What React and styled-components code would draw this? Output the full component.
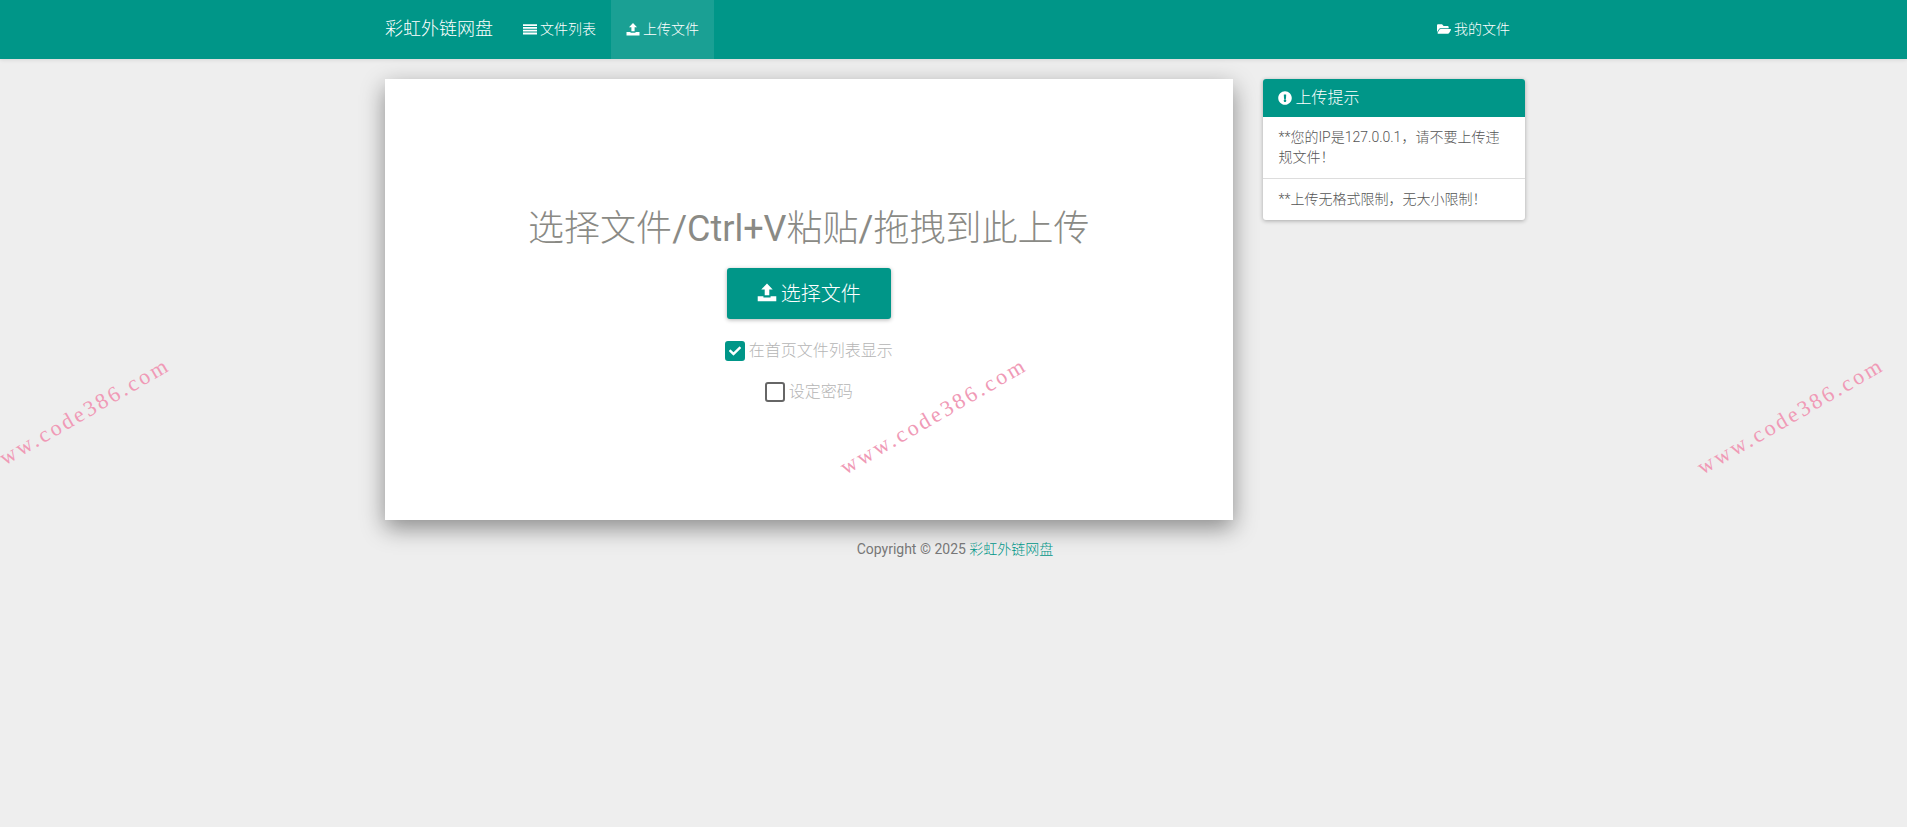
import React from "react";
import styled, { createGlobalStyle } from "styled-components";
import { FaFolderOpen, FaExclamationCircle, FaCheck } from "react-icons/fa";

const Global = createGlobalStyle`
  html, body { margin: 0; padding: 0; height: 100%; background: #eeeeee; }
  body { font-family: Roboto, "Noto Sans CJK SC", sans-serif; font-size: 14px; line-height: 20px; color: #666; overflow: hidden; }
  #root { position: relative; min-height: 827px; }
`;
const Navbar = styled.nav`
  height: 59px; background: #009688; box-shadow: 0 1px 4px rgba(0,0,0,.1);
`;
const Container = styled.div`
  width: 1170px; margin: 0 auto; position: relative; left: 1.5px; display: flex;
`;
const NavInner = styled(Container)`
  padding: 0 15px; box-sizing: border-box; height: 59px; align-items: stretch;
`;
const Brand = styled.a`
  font-size: 18px; font-weight: 300; color: #fff; padding: 0 15px 1px 0; display: flex; align-items: center;
`;
const NavLink = styled.a`
  display: flex; align-items: center; gap: 3px; padding: 0 15px 2px; color: #fff; font-size: 14px; font-weight: 300;
  background: ${p => (p.$active ? "rgba(255,255,255,.1)" : "transparent")};
  margin-left: ${p => (p.$right ? "auto" : "0")};
  svg { width: 14px; height: 14px; }
`;
const Main = styled(Container)`
  padding-top: 20px; align-items: flex-start;
`;
const Column = styled.div`
  box-sizing: border-box; padding: 0 15px; width: ${p => p.$w}px;
`;
const Card = styled.section`
  height: 441px; box-sizing: border-box; background: #fff; padding-top: 130px;
  box-shadow: 0 8px 22px rgba(0,0,0,.42);
  display: flex; flex-direction: column; align-items: center;
`;
const Title = styled.h1`
  margin: 0; font-size: 36px; line-height: 40px; font-weight: 300; color: #8a8a85;
`;
const Latin = styled.span`
  font-weight: 400;
`;
const UploadButton = styled.button`
  margin-top: 19px; height: 51px; width: 164px; border: 0; border-radius: 3px; background: #009688; color: #fff; padding-bottom: 4px;
  font: 300 20px Roboto, "Noto Sans CJK SC", sans-serif; display: flex; align-items: center; justify-content: center; gap: 4px;
  box-shadow: 0 1px 4px rgba(0,0,0,.3);
  svg { width: 20px; height: 20px; }
`;
const CheckRow = styled.label`
  display: flex; align-items: center; gap: 4px; height: 24px; font-size: 16px; font-weight: 300; color: #b5b5b5;
  margin-top: ${p => p.$mt}px;
`;
const Box = styled.span`
  width: 20px; height: 20px; box-sizing: border-box; border-radius: 3px; display: flex; align-items: center; justify-content: center;
  background: ${p => (p.$checked ? "#009688" : "#fff")};
  border: 2px solid ${p => (p.$checked ? "#009688" : "#666")};
  color: #fff;
  svg { width: 12px; height: 12px; }
`;
const Panel = styled.aside`
  background: #fff; border-radius: 3px; box-shadow: 0 1px 4px rgba(0,0,0,.3); overflow: hidden;
`;
const PanelHead = styled.div`
  height: 38px; background: #009688; color: #fff; font-size: 16px; font-weight: 300; padding: 0 15px; display: flex; align-items: center; gap: 4px;
  svg { width: 14px; height: 14px; }
`;
const PanelItem = styled.div`
  padding: 10px 15px 11px 16px; color: #555; font-size: 14px; font-weight: 300; line-height: 20px;
  & + & { border-top: 1px solid #ddd; }
`;
const Footer = styled.footer`
  text-align: center; width: 1170px; margin: 19px auto 0; position: relative; left: 1.5px; color: #777; font-size: 14px;
  a { color: #009688; font-weight: 300; }
`;
const Mark = styled.span`
  position: absolute; left: ${p => p.$x}px; top: 459px; transform: rotate(-30deg); transform-origin: 0 50%;
  font-family: "Liberation Serif", serif; font-size: 22px; line-height: 20px; letter-spacing: 2.8px; color: #f09ab6; white-space: nowrap;
  pointer-events: none;
`;

const UploadIcon = () => (
  <svg viewBox="0 0 14 14" fill="currentColor" aria-hidden="true">
    <path d="M7 1 L11 5.2 H8.6 V9.2 H5.4 V5.2 H3 Z" />
    <path d="M0.5 10 H4.5 V10.8 H9.5 V10 H13.5 V13.5 H0.5 Z" />
  </svg>
);
const ListIcon = () => (
  <svg viewBox="0 0 14 14" fill="currentColor" aria-hidden="true">
    <path d="M0 2.2 H14 V4 H0 Z M0 5 H14 V6.8 H0 Z M0 7.8 H14 V9.6 H0 Z M0 10.6 H14 V12.4 H0 Z" />
  </svg>
);

export default function App() {
  return (
    <>
      <Global />
      <Navbar>
        <NavInner>
          <Brand>彩虹外链网盘</Brand>
          <NavLink><ListIcon />文件列表</NavLink>
          <NavLink $active><UploadIcon />上传文件</NavLink>
          <NavLink $right><FaFolderOpen />我的文件</NavLink>
        </NavInner>
      </Navbar>
      <Main>
        <Column $w={877.5}>
          <Card>
            <Title>选择文件<Latin>/Ctrl+V</Latin>粘贴<Latin>/</Latin>拖拽到此上传</Title>
            <UploadButton><UploadIcon />选择文件</UploadButton>
            <CheckRow $mt={20}><Box $checked><FaCheck /></Box>在首页文件列表显示</CheckRow>
            <CheckRow $mt={17}><Box />设定密码</CheckRow>
          </Card>
        </Column>
        <Column $w={292.5}>
          <Panel>
            <PanelHead><FaExclamationCircle />上传提示</PanelHead>
            <PanelItem>**您的IP是127.0.0.1，请不要上传违规文件！</PanelItem>
            <PanelItem>**上传无格式限制，无大小限制！</PanelItem>
          </Panel>
        </Column>
      </Main>
      <Footer>Copyright © 2025 <a>彩虹外链网盘</a></Footer>
      <Mark $x={-15}>www.code386.com</Mark>
      <Mark $x={842}>www.code386.com</Mark>
      <Mark $x={1699}>www.code386.com</Mark>
    </>
  );
}
